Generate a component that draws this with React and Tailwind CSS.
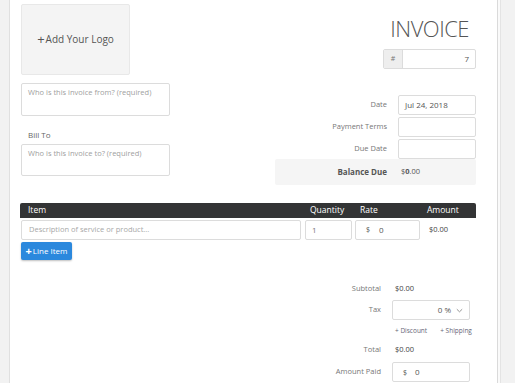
import React from "react";

const font = { fontFamily: '"Open Sans", "Liberation Sans", sans-serif' };

function Box({ className = "", children }) {
  return (
    <div className={"border border-[#dcdcdc] rounded-[2px] bg-white flex items-center " + className}>
      {children}
    </div>
  );
}

function Row({ label, children, bold }) {
  return (
    <div className="flex items-center gap-[11px]">
      <div className={"w-[112px] text-right text-[7.5px] leading-none " + (bold ? "font-bold text-[#444]" : "text-[#777]")}>{label}</div>
      {children}
    </div>
  );
}

export default function App() {
  return (
    <div className="w-[515px] h-[383px] flex overflow-hidden bg-white" style={font}>
      <div className="w-[10px] h-full bg-[#f2f2f2] border-r border-[#e0e0e0] shrink-0" />
      <div className="w-[487px] h-full shrink-0 pl-[11px] pt-[4px]">
        {/* top */}
        <div className="flex w-[455px] justify-between">
          <div className="w-[149px] flex flex-col">
            <div className="w-[109px] h-[71px] bg-[#f4f4f4] border border-[#e8e8e8] rounded-[2px] flex items-center justify-center text-[10px] text-[#555]">
              <span className="text-[13px] leading-none mr-[1px] -mt-[1px]">+</span>Add Your Logo
            </div>
            <div className="mt-[8px] h-[33px] border border-[#dcdcdc] rounded-[2px] px-[6px] pt-[5px] text-[7.5px] leading-none text-[#a0a0a0]">
              Who is this invoice from? (required)
            </div>
            <div className="mt-[15px] ml-[7px] text-[8px] leading-none text-[#666]">Bill To</div>
            <div className="mt-[5px] h-[32px] border border-[#dcdcdc] rounded-[2px] px-[6px] pt-[5px] text-[7.5px] leading-none text-[#a0a0a0]">
              Who is this invoice to? (required)
            </div>
          </div>
          <div className="w-[201px] flex flex-col items-end">
            <div className="mt-[13px] mr-[7px] text-[22px] leading-none font-light text-[#555] tracking-[-0.5px]">INVOICE</div>
            <div className="mt-[10px] w-[93px] h-[20px] border border-[#dcdcdc] rounded-[2px] flex overflow-hidden">
              <div className="w-[19px] h-full bg-[#eeeeee] border-r border-[#dcdcdc] flex items-center justify-center text-[7px] text-[#777]">#</div>
              <div className="flex-1 flex items-center justify-end pr-[6px] text-[8px] text-[#555]">7</div>
            </div>
            <div className="mt-[26px] w-full flex flex-col gap-[2px]">
              <Row label="Date">
                <Box className="w-[78px] h-[20px] px-[6px] text-[8px] text-[#555]">Jul 24, 2018</Box>
              </Row>
              <Row label="Payment Terms">
                <Box className="w-[78px] h-[20px]" />
              </Row>
              <Row label="Due Date">
                <Box className="w-[78px] h-[20px]" />
              </Row>
            </div>
            <div className="w-full h-[26px] bg-[#f5f5f5] rounded-[2px] flex items-center gap-[14px]">
              <div className="w-[112px] text-right text-[8px] leading-none font-bold text-[#555]">Balance Due</div>
              <div className="text-[7.5px] leading-none text-[#555]">$<span className="font-bold">0</span>.00</div>
            </div>
          </div>
        </div>

        {/* table */}
        <div className="mt-[18px] -ml-[1px] w-[456px] h-[15px] bg-[#333435] rounded-t-[2px] grid grid-cols-[285px_50px_70px_1fr] items-center text-[8.5px] leading-none text-white">
          <div className="pl-[8px]">Item</div>
          <div className="pl-[5px]">Quantity</div>
          <div className="pl-[5px]">Rate</div>
          <div className="pl-[2px]">Amount</div>
        </div>
        <div className="mt-[2px] w-[455px] grid grid-cols-[284px_50px_70px_1fr] items-center">
          <Box className="w-[280px] h-[20px] px-[7px] text-[7.5px] text-[#a8a8a8]">Description of service or product...</Box>
          <Box className="w-[47px] h-[20px] px-[6px] text-[8px] text-[#777]">1</Box>
          <Box className="w-[65px] h-[20px] px-[10px] text-[8px] text-[#555]">
            <span className="text-[7px]">$</span>
            <span className="ml-[9px]">0</span>
          </Box>
          <div className="pl-[4px] text-[7.5px] text-[#444]">$0.00</div>
        </div>
        <div className="mt-[2px] w-[51px] h-[18px] bg-[#2b88dd] rounded-[2px] shadow-[0_1px_2px_rgba(0,0,0,0.25)] flex items-center justify-center text-[8px] leading-none text-white whitespace-nowrap">
          <span className="text-[11px] font-bold mr-[1px] -mt-[1px]">+</span>Line Item
        </div>

        {/* totals */}
        <div className="ml-[260px] w-[189px] flex flex-col text-[7.5px] leading-none">
          <div className="mt-[19px] h-[20px] flex items-center gap-[11px]">
            <div className="w-[100px] text-right text-[#777]">Subtotal</div>
            <div className="pl-[3px] text-[7.5px] text-[#444]">$0.00</div>
          </div>
          <div className="mt-[1px] h-[20px] flex items-center gap-[11px]">
            <div className="w-[100px] text-right text-[#777]">Tax</div>
            <Box className="w-[78px] h-[20px] justify-end pr-[6px] text-[8px] text-[#555]">
              <span>0 %</span>
              <svg className="ml-[5px]" width="7" height="5" viewBox="0 0 7 5" fill="none">
                <path d="M0.8 1.2 L3.5 3.8 L6.2 1.2" stroke="#888" strokeWidth="0.9" />
              </svg>
            </Box>
          </div>
          <div className="mt-[2px] h-[18px] flex items-center whitespace-nowrap">
            <div className="w-[114px] shrink-0" />
            <div className="text-[6.5px] text-[#667]">+ Discount</div>
            <div className="ml-[13px] text-[6.5px] text-[#667]">+ Shipping</div>
          </div>
          <div className="h-[20px] flex items-center gap-[11px]">
            <div className="w-[100px] text-right text-[#777]">Total</div>
            <div className="pl-[3px] text-[7.5px] text-[#444]">$0.00</div>
          </div>
          <div className="mt-[2px] h-[20px] flex items-center gap-[11px]">
            <div className="w-[100px] text-right text-[#777]">Amount Paid</div>
            <Box className="w-[78px] h-[20px] px-[10px] text-[8px] text-[#555]">
              <span className="text-[7px]">$</span>
              <span className="ml-[8px]">0</span>
            </Box>
          </div>
        </div>
      </div>
      <div className="flex-1 h-full border-l border-[#dadada] flex">
        <div className="w-[2px] bg-[#fafafa]" />
        <div className="flex-1 bg-[#f2f2f2] border-l border-[#e4e4e4]" />
      </div>
    </div>
  );
}
